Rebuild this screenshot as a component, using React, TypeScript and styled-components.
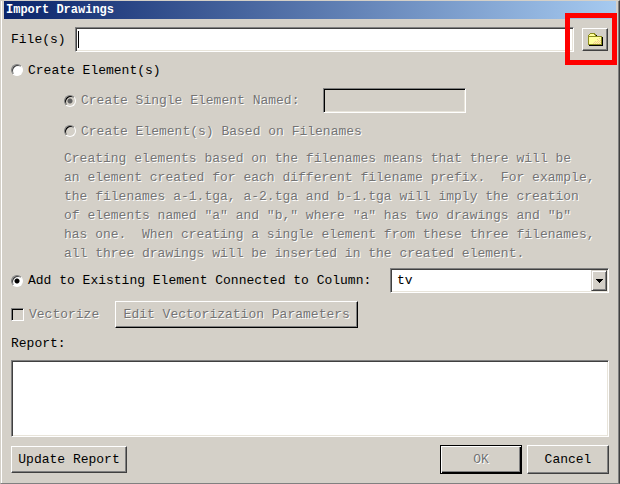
import React, { useState } from "react";
import styled, { createGlobalStyle, css } from "styled-components";

const face = "#d4d0c8";
const shade = "#808080";
const dark = "#404040";

const GlobalStyle = createGlobalStyle`
  *, *::before, *::after { box-sizing: border-box; }
  body { margin: 0; background: ${face}; }
  body, button, input, select, textarea {
    font-family: "Liberation Mono", monospace;
    font-size: 13px;
    line-height: 19px;
    color: #000;
  }
`;

const sunken = css`
  border: 1px solid;
  border-color: ${shade} #fff #fff ${shade};
  box-shadow: inset 1px 1px ${dark}, inset -1px -1px #e8e4da;
  border-radius: 0;
  outline: none;
`;

const etched = css`
  color: #747474;
  text-shadow: 1px 1px #fff;
`;

const Dialog = styled.main`
  min-height: 100vh;
  padding: 0 3px;
  background: ${face};
  border: 1px solid;
  border-color: ${face} ${dark} ${shade} ${face};
  box-shadow: inset 1px 0 #fff, inset -1px 0 ${shade};
`;

const TitleBar = styled.h1`
  margin: 0;
  height: 18px;
  padding-left: 2px;
  background: linear-gradient(to right, #0a246a, #a6caf0);
  color: #fff;
  font-size: 12px;
  font-weight: bold;
  line-height: 18px;
`;

const Form = styled.form`
  display: flex;
  flex-direction: column;
  gap: 5px;
  padding: 8px 7px;
`;

const Section = styled.section`
  display: flex;
  flex-direction: column;
  gap: 8px;
`;

const Row = styled.div<{ $split?: boolean }>`
  display: flex;
  align-items: center;
  justify-content: ${(p) => (p.$split ? "space-between" : "flex-start")};
`;

const NameRow = styled(Row)`
  gap: 24px;
`;

const VectorRow = styled(Row)`
  gap: 16px;
`;

const FileLabel = styled.label`
  flex: 0 0 64px;
`;

const FileInput = styled.input`
  ${sunken}
  flex: 1;
  min-width: 0;
  height: 25px;
  padding: 0 6px;
  background: #fff linear-gradient(#000, #000) 2px center / 1px 17px no-repeat;
  &:focus { background-image: none; }
`;

const Nested = styled.div`
  display: flex;
  flex-direction: column;
  gap: 8px;
  padding-left: 53px;
`;

const NameInput = styled.input`
  ${sunken}
  width: 143px;
  height: 25px;
  background: ${face};
  box-shadow: inset 1px 1px #000, inset -1px -1px #e8e4da;
`;

const Choice = styled.label<{ $off?: boolean }>`
  display: flex;
  align-items: center;
  gap: 5px;
  height: 20px;
  white-space: nowrap;
  ${(p) => p.$off && etched}
`;

const Radio = styled.input`
  appearance: none;
  flex: none;
  width: 12px;
  height: 12px;
  margin: 0;
  border: 1px solid;
  border-color: ${shade} #fff #fff ${shade};
  border-radius: 50%;
  background: #fff;
  box-shadow: inset 1px 1px ${dark};
  &:checked { background: radial-gradient(circle at center, #000 2px, #fff 3px); }
  &:disabled { background: ${face}; box-shadow: inset 1px 1px #000; }
  &:disabled:checked { background: radial-gradient(circle at center, #606060 2px, ${face} 3px); }
`;

const Check = styled.input`
  ${sunken}
  appearance: none;
  flex: none;
  width: 13px;
  height: 13px;
  margin: 0;
  background: ${face};
  box-shadow: inset 1px 1px #000;
`;

const Hint = styled.p`
  ${etched}
  margin: 0;
  white-space: pre;
`;

const Button = styled.button<{ $width: number; $height: number; $primary?: boolean }>`
  width: ${(p) => p.$width}px;
  height: ${(p) => p.$height}px;
  padding: 0;
  background: ${face};
  border: 1px solid;
  border-color: #fff ${dark} ${dark} #fff;
  border-radius: 0;
  box-shadow: inset -1px -1px ${shade};
  &:disabled { ${etched} border-color: #fff #000 #000 #fff; }
  ${(p) =>
    p.$primary &&
    css`
      &:disabled {
        border-color: #000;
        box-shadow: inset 1px 1px #fff, inset -1px -1px #000, inset -2px -2px ${shade};
      }
    `}
`;

const BrowseButton = styled(Button)`
  display: grid;
  place-items: center;
`;

const Browse = styled.div`
  position: relative;
  flex: none;
  margin: 0 1px 0 8px;
`;

const Highlight = styled.span`
  position: absolute;
  inset: -15px -9px -14px -17px;
  border: 5px solid #f00;
  pointer-events: none;
`;

const SelectBox = styled.div`
  position: relative;
  flex: 0 0 219px;
`;

const Select = styled.select`
  ${sunken}
  appearance: none;
  display: block;
  width: 100%;
  height: 25px;
  padding: 0 20px 0 6px;
  background: #fff;
`;

const SelectArrow = styled.span`
  position: absolute;
  top: 2px;
  right: 2px;
  bottom: 2px;
  width: 16px;
  display: grid;
  place-items: center;
  background: ${face};
  border: 1px solid;
  border-color: ${face} ${dark} ${dark} ${face};
  box-shadow: inset 1px 1px #fff, inset -1px -1px ${shade};
  pointer-events: none;
`;

const ReportLabel = styled.label`
  line-height: 16px;
`;

const Report = styled.textarea`
  ${sunken}
  display: block;
  width: 100%;
  height: 77px;
  padding: 3px 5px;
  background: #fff;
  resize: none;
`;

const Actions = styled.div`
  display: flex;
  gap: 5px;
`;

const HINT = `Creating elements based on the filenames means that there will be
an element created for each different filename prefix.  For example,
the filenames a-1.tga, a-2.tga and b-1.tga will imply the creation
of elements named "a" and "b," where "a" has two drawings and "b"
has one.  When creating a single element from these three filenames,
all three drawings will be inserted in the created element.`;

function FolderIcon() {
  return (
    <svg width="16" height="14" viewBox="0 0 16 14" shapeRendering="crispEdges" aria-hidden="true">
      <path d="M2 13h14V4h-1v8H2zM8 1h1v1h1v1H8z" fill="#000" />
      <path d="M1 2h1V1h1V0h5v1h1v2h6v9H1z" fill="#8c8c1e" />
      <path d="M2 4h12v7H2zM3 1h4v1h1v1H2V2h1z" fill="#ffff9c" />
      <path
        d="M12 5h1v1h-1zM10 6h1v1h-1zM11 7h1v1h-1zM13 7h1v1h-1zM8 8h1v1H8zM10 8h1v1h-1zM12 8h1v1h-1zM7 9h1v1H7zM9 9h1v1H9zM11 9h1v1h-1zM13 9h1v1h-1zM6 10h1v1H6zM8 10h1v1H8zM10 10h1v1h-1zM12 10h1v1h-1z"
        fill="#f4c898"
      />
    </svg>
  );
}

export default function App() {
  const [mode, setMode] = useState("existing");
  return (
    <>
      <GlobalStyle />
      <Dialog>
        <TitleBar>Import Drawings</TitleBar>
        <Form onSubmit={(e) => e.preventDefault()}>
          <Section>
            <Row>
              <FileLabel htmlFor="files">File(s)</FileLabel>
              <FileInput id="files" type="text" />
              <Browse>
                <BrowseButton type="button" $width={26} $height={23} aria-label="Browse">
                  <FolderIcon />
                </BrowseButton>
                <Highlight />
              </Browse>
            </Row>
            <Choice>
              <Radio type="radio" name="mode" checked={mode === "create"} onChange={() => setMode("create")} />
              Create Element(s)
            </Choice>
            <Nested>
              <NameRow>
                <Choice $off>
                  <Radio type="radio" name="naming" defaultChecked disabled />
                  <span id="single-name">Create Single Element Named:</span>
                </Choice>
                <NameInput type="text" aria-labelledby="single-name" disabled />
              </NameRow>
              <Choice $off>
                <Radio type="radio" name="naming" disabled />
                Create Element(s) Based on Filenames
              </Choice>
              <Hint>{HINT}</Hint>
            </Nested>
          </Section>
          <Section>
            <Row $split>
              <Choice>
                <Radio type="radio" name="mode" checked={mode === "existing"} onChange={() => setMode("existing")} />
                <span id="column-label">Add to Existing Element Connected to Column:</span>
              </Choice>
              <SelectBox>
                <Select aria-labelledby="column-label" defaultValue="tv">
                  <option value="tv">tv</option>
                </Select>
                <SelectArrow>
                  <svg width="7" height="4" viewBox="0 0 7 4" shapeRendering="crispEdges" aria-hidden="true">
                    <path d="M0 0h7v1H6v1H5v1H4v1H3V3H2V2H1V1H0z" />
                  </svg>
                </SelectArrow>
              </SelectBox>
            </Row>
            <VectorRow>
              <Choice $off>
                <Check type="checkbox" disabled />
                Vectorize
              </Choice>
              <Button type="button" $width={243} $height={27} disabled>
                Edit Vectorization Parameters
              </Button>
            </VectorRow>
            <ReportLabel htmlFor="report">Report:</ReportLabel>
            <Report id="report" />
            <Row $split>
              <Button type="button" $width={116} $height={27}>
                Update Report
              </Button>
              <Actions>
                <Button type="submit" $width={82} $height={29} $primary disabled>
                  OK
                </Button>
                <Button type="button" $width={82} $height={29}>
                  Cancel
                </Button>
              </Actions>
            </Row>
          </Section>
        </Form>
      </Dialog>
    </>
  );
}
